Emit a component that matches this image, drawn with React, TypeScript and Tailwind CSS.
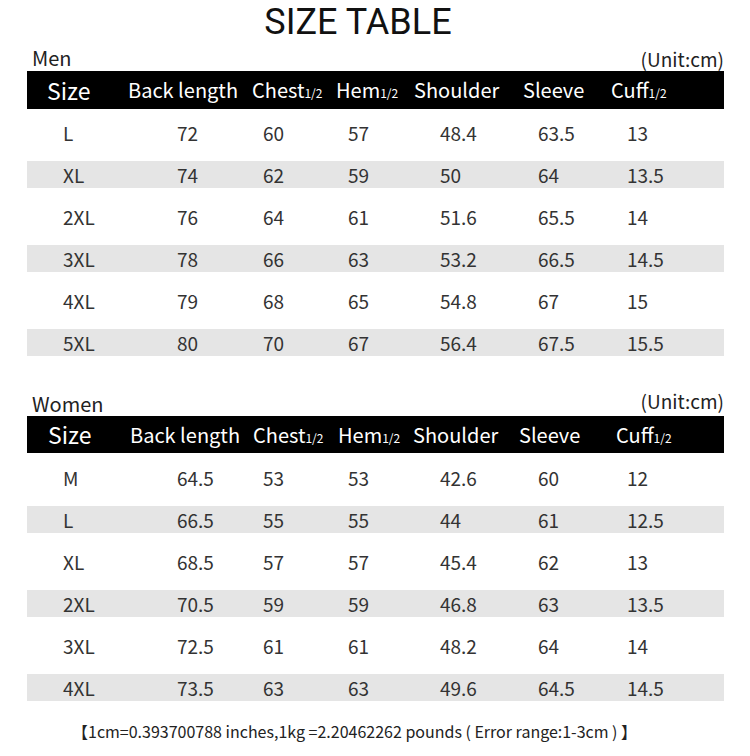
import React from 'react';

const FONT = "font-['Noto_Sans_CJK_SC','Noto_Sans',sans-serif]";

interface Header {
  label: string;
  half?: boolean;
}

const headers: Header[] = [
  { label: 'Back length' },
  { label: 'Chest', half: true },
  { label: 'Hem', half: true },
  { label: 'Shoulder' },
  { label: 'Sleeve' },
  { label: 'Cuff', half: true },
];

const menRows = [
  ['L', '72', '60', '57', '48.4', '63.5', '13'],
  ['XL', '74', '62', '59', '50', '64', '13.5'],
  ['2XL', '76', '64', '61', '51.6', '65.5', '14'],
  ['3XL', '78', '66', '63', '53.2', '66.5', '14.5'],
  ['4XL', '79', '68', '65', '54.8', '67', '15'],
  ['5XL', '80', '70', '67', '56.4', '67.5', '15.5'],
];

const womenRows = [
  ['M', '64.5', '53', '53', '42.6', '60', '12'],
  ['L', '66.5', '55', '55', '44', '61', '12.5'],
  ['XL', '68.5', '57', '57', '45.4', '62', '13'],
  ['2XL', '70.5', '59', '59', '46.8', '63', '13.5'],
  ['3XL', '72.5', '61', '61', '48.2', '64', '14'],
  ['4XL', '73.5', '63', '63', '49.6', '64.5', '14.5'],
];

function HeaderBar({ women }: { women?: boolean }) {
  return (
    <div
      className={
        women
          ? 'grid h-[37px] grid-cols-[82px_123px_85px_75px_106px_97px_1fr] items-center bg-black pl-[21px] text-white'
          : 'grid h-[38px] grid-cols-[81px_124px_84px_78px_109px_88px_1fr] items-center bg-black pl-[20px] text-white'
      }
    >
      <span className="text-[23px] leading-none">Size</span>
      {headers.map((h) => (
        <span key={h.label} className="whitespace-nowrap text-[20px] leading-none">
          {h.label}
          {h.half && <span className="text-[12px]">1/2</span>}
        </span>
      ))}
    </div>
  );
}

function Rows({ rows, women }: { rows: string[][]; women?: boolean }) {
  return (
    <div className={women ? 'mt-[11px] flex flex-col gap-[15px]' : 'mt-[10px] flex flex-col gap-[15px]'}>
      {rows.map((r, i) => (
        <div
          key={r[0]}
          className={
            'grid h-[27px] grid-cols-[114px_86px_85px_92px_98px_89px_1fr] items-center pl-[36px] text-[19px] leading-none text-[#333] ' +
            (i % 2 === 1 ? 'bg-[#e5e5e5]' : '')
          }
        >
          {r.map((c, j) => (
            <span key={j}>{c}</span>
          ))}
        </div>
      ))}
    </div>
  );
}

export default function App() {
  return (
    <div className={`h-[756px] w-[750px] bg-white ${FONT}`}>
      <div className="h-[46px] pr-[34px] text-center font-['Roboto',sans-serif] text-[36px] leading-[44px] text-[#111]">
        SIZE TABLE
      </div>

      <div className="ml-[27px] w-[697px]">
        <div className="flex h-[25px] items-end justify-between pb-[3px] pl-[5px] text-[#222]">
          <span className="text-[20px] leading-none">Men</span>
          <span className="text-[19px] leading-none">(Unit:cm)</span>
        </div>
        <HeaderBar />
        <Rows rows={menRows} />

        <div className="flex h-[60px] items-end justify-between pl-[5px] text-[#222]">
          <span className="pb-[2px] text-[20px] leading-none">Women</span>
          <span className="pb-[6px] text-[19px] leading-none">(Unit:cm)</span>
        </div>
        <HeaderBar women />
        <Rows rows={womenRows} women />
      </div>

      <div className="mt-[22px] pl-[72px] text-[16px] leading-none text-[#222]">
        【1cm=0.393700788 inches,1kg =2.20462262 pounds ( Error range:1-3cm ) 】
      </div>
    </div>
  );
}
